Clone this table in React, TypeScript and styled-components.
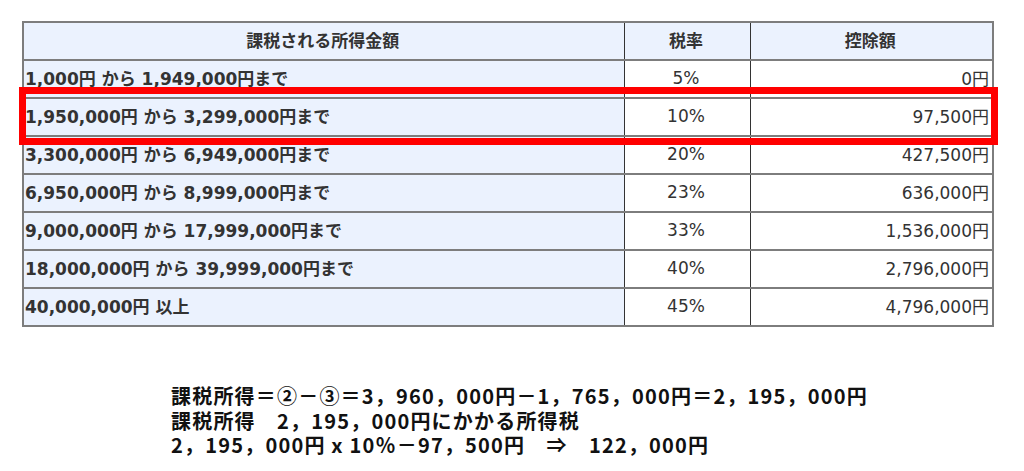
import React from "react";
import styled, { createGlobalStyle } from "styled-components";

const Global = createGlobalStyle`
  html, body { margin: 0; padding: 0; background: #ffffff; }
  body { font-family: "DejaVu Sans", "Noto Sans CJK JP", sans-serif; }
`;

const Page = styled.div`
  width: 1024px;
  height: 471px;
  padding: 21px 0 0 22px;
  box-sizing: border-box;
  overflow: hidden;
`;

const TableWrap = styled.div`
  position: relative;
  width: 970px;
`;

const Table = styled.table`
  width: 970px;
  border-collapse: collapse;
  border: 2px solid #7d7d7d;
  table-layout: fixed;
  font-family: "DejaVu Sans", "Noto Sans CJK JP", sans-serif;
  font-size: 17px;
  color: #333333;
`;

const Cell = styled.td<{ $align?: "left" | "center" | "right"; $head?: boolean; $bold?: boolean }>`
  height: 38px;
  padding: 0 3px 3px 1px;
  box-sizing: border-box;
  border-top: 2px solid #7d7d7d;
  border-bottom: 2px solid #7d7d7d;
  border-left: 1px solid #333333;
  border-right: 1px solid #333333;
  text-align: ${(p) => p.$align || "left"};
  vertical-align: middle;
  background: ${(p) => (p.$head ? "#ebf2fe" : "#ffffff")};
  font-weight: ${(p) => (p.$bold ? 700 : 400)};
  white-space: nowrap;
`;

const Highlight = styled.div`
  position: absolute;
  left: -3px;
  top: 66px;
  width: 979px;
  height: 58px;
  border: 7px solid #ff0000;
  box-sizing: border-box;
  pointer-events: none;
`;

const Note = styled.div`
  margin: 57px 0 0 149px;
  font-family: "Noto Sans CJK JP", sans-serif;
  font-weight: 700;
  font-size: 20px;
  letter-spacing: 1.2px;
  line-height: 24.5px;
  color: #111111;
`;

const NoteLine = styled.div`
  white-space: pre;
`;

const rows: [string, string, string][] = [
  ["1,000円 から 1,949,000円まで", "5%", "0円"],
  ["1,950,000円 から 3,299,000円まで", "10%", "97,500円"],
  ["3,300,000円 から 6,949,000円まで", "20%", "427,500円"],
  ["6,950,000円 から 8,999,000円まで", "23%", "636,000円"],
  ["9,000,000円 から 17,999,000円まで", "33%", "1,536,000円"],
  ["18,000,000円 から 39,999,000円まで", "40%", "2,796,000円"],
  ["40,000,000円 以上", "45%", "4,796,000円"],
];

export default function App() {
  return (
    <Page>
      <Global />
      <TableWrap>
        <Table>
          <colgroup>
            <col style={{ width: 601 }} />
            <col style={{ width: 126 }} />
            <col style={{ width: 243 }} />
          </colgroup>
          <thead>
            <tr>
              <Cell as="th" $head $bold $align="center">課税される所得金額</Cell>
              <Cell as="th" $head $bold $align="center">税率</Cell>
              <Cell as="th" $head $bold $align="center">控除額</Cell>
            </tr>
          </thead>
          <tbody>
            {rows.map((r) => (
              <tr key={r[0]}>
                <Cell as="th" $head $bold $align="left">{r[0]}</Cell>
                <Cell $align="center">{r[1]}</Cell>
                <Cell $align="right">{r[2]}</Cell>
              </tr>
            ))}
          </tbody>
        </Table>
        <Highlight />
      </TableWrap>
      <Note>
        <NoteLine>課税所得＝②－③＝3，960，000円－1，765，000円＝2，195，000円</NoteLine>
        <NoteLine>課税所得　2，195，000円にかかる所得税</NoteLine>
        <NoteLine>2，195，000円 x 10％－97，500円　⇒　122，000円</NoteLine>
      </Note>
    </Page>
  );
}
